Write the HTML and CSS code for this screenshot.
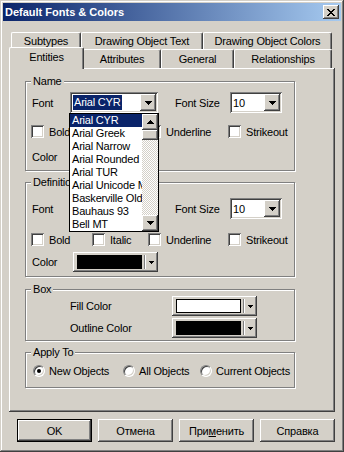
FILE: index.html
```html
<!DOCTYPE html>
<html lang="en">
<head>
    <meta charset="UTF-8">
    <title>Default Fonts &amp; Colors</title>
<link rel="stylesheet" href="styles.css">
</head>
<body>
    <div class="window">
        <div class="titlebar">
            <span class="title">Default Fonts &amp; Colors</span>
            <span class="close raised">
                <svg width="8" height="7" viewBox="0 0 8 7"><path d="M0 0h2v1H0zM6 0h2v1H6zM1 1h2v1H1zM5 1h2v1H5zM2 2h4v1H2zM3 3h2v1H3zM2 4h4v1H2zM1 5h2v1H1zM5 5h2v1H5zM0 6h2v1H0zM6 6h2v1H6z"/></svg>
            </span>
        </div>

        <div class="tabs">
            <div class="tab-row back">
                <div class="tab" style="width: 70px">Subtypes</div>
                <div class="tab" style="width: 122px">Drawing Object Text</div>
                <div class="tab" style="width: 129px">Drawing Object Colors</div>
            </div>
            <div class="tab-row front">
                <div class="tab active" style="width: 75px">Entities</div>
                <div class="tab" style="width: 78px">Attributes</div>
                <div class="tab" style="width: 73px">General</div>
                <div class="tab" style="width: 98px">Relationships</div>
            </div>

            <div class="panel">
                <fieldset class="group group-name">
                    <legend>Name</legend>
                    <div class="row font-row">
                        <span class="lbl lbl-font">Font</span>
                        <div class="combo combo-font">
                            <span class="combo-value"><span class="sel">Arial CYR</span></span>
                            <span class="combo-btn raised"><svg width="7" height="4" viewBox="0 0 7 4"><path d="M0 0h7v1H0zM1 1h5v1H1zM2 2h3v1H2zM3 3h1v1H3z"/></svg></span>
                            <div class="dropdown">
                                <div class="list-items">
                                    <div class="sel">Arial CYR</div>
                                    <div>Arial Greek</div>
                                    <div>Arial Narrow</div>
                                    <div>Arial Rounded</div>
                                    <div>Arial TUR</div>
                                    <div>Arial Unicode MS</div>
                                    <div>Baskerville Old Face</div>
                                    <div>Bauhaus 93</div>
                                    <div>Bell MT</div>
                                </div>
                                <div class="scrollbar">
                                    <span class="sb-btn raised"><svg width="7" height="4" viewBox="0 0 7 4"><path d="M3 0h1v1H3zM2 1h3v1H2zM1 2h5v1H1zM0 3h7v1H0z"/></svg></span>
                                    <span class="sb-thumb raised"></span>
                                    <span class="sb-track"></span>
                                    <span class="sb-btn raised"><svg width="7" height="4" viewBox="0 0 7 4"><path d="M0 0h7v1H0zM1 1h5v1H1zM2 2h3v1H2zM3 3h1v1H3z"/></svg></span>
                                </div>
                            </div>
                        </div>
                        <span class="lbl lbl-size">Font Size</span>
                        <div class="combo combo-size">
                            <span class="combo-value">10</span>
                            <span class="combo-btn raised"><svg width="7" height="4" viewBox="0 0 7 4"><path d="M0 0h7v1H0zM1 1h5v1H1zM2 2h3v1H2zM3 3h1v1H3z"/></svg></span>
                        </div>
                    </div>
                    <div class="row check-row">
                        <label class="check" style="width: 61px"><span class="box"></span>Bold</label>
                        <label class="check" style="width: 56px"><span class="box"></span>Italic</label>
                        <label class="check" style="width: 80px"><span class="box"></span>Underline</label>
                        <label class="check"><span class="box"></span>Strikeout</label>
                    </div>
                    <div class="row color-row">
                        <span class="lbl lbl-color">Color</span>
                        <div class="picker raised">
                            <span class="swatch black"></span>
                            <span class="sep"></span>
                            <span class="mini-arrow"><svg width="5" height="3" viewBox="0 0 5 3"><path d="M0 0h5v1H0zM1 1h3v1H1zM2 2h1v1H2z"/></svg></span>
                        </div>
                    </div>
                </fieldset>

                <fieldset class="group group-def">
                    <legend>Definition</legend>
                    <div class="row font-row">
                        <span class="lbl lbl-font">Font</span>
                        <div class="combo combo-font">
                            <span class="combo-value">Arial CYR</span>
                            <span class="combo-btn raised"><svg width="7" height="4" viewBox="0 0 7 4"><path d="M0 0h7v1H0zM1 1h5v1H1zM2 2h3v1H2zM3 3h1v1H3z"/></svg></span>
                        </div>
                        <span class="lbl lbl-size">Font Size</span>
                        <div class="combo combo-size">
                            <span class="combo-value">10</span>
                            <span class="combo-btn raised"><svg width="7" height="4" viewBox="0 0 7 4"><path d="M0 0h7v1H0zM1 1h5v1H1zM2 2h3v1H2zM3 3h1v1H3z"/></svg></span>
                        </div>
                    </div>
                    <div class="row check-row">
                        <label class="check" style="width: 61px"><span class="box"></span>Bold</label>
                        <label class="check" style="width: 56px"><span class="box"></span>Italic</label>
                        <label class="check" style="width: 80px"><span class="box"></span>Underline</label>
                        <label class="check"><span class="box"></span>Strikeout</label>
                    </div>
                    <div class="row color-row">
                        <span class="lbl lbl-color">Color</span>
                        <div class="picker raised">
                            <span class="swatch black"></span>
                            <span class="sep"></span>
                            <span class="mini-arrow"><svg width="5" height="3" viewBox="0 0 5 3"><path d="M0 0h5v1H0zM1 1h3v1H1zM2 2h1v1H2z"/></svg></span>
                        </div>
                    </div>
                </fieldset>

                <fieldset class="group group-box">
                    <legend>Box</legend>
                    <div class="row box-row">
                        <span class="lbl lbl-box">Fill Color</span>
                        <div class="picker raised">
                            <span class="swatch white"></span>
                            <span class="sep"></span>
                            <span class="mini-arrow"><svg width="5" height="3" viewBox="0 0 5 3"><path d="M0 0h5v1H0zM1 1h3v1H1zM2 2h1v1H2z"/></svg></span>
                        </div>
                    </div>
                    <div class="row box-row">
                        <span class="lbl lbl-box">Outline Color</span>
                        <div class="picker raised">
                            <span class="swatch black"></span>
                            <span class="sep"></span>
                            <span class="mini-arrow"><svg width="5" height="3" viewBox="0 0 5 3"><path d="M0 0h5v1H0zM1 1h3v1H1zM2 2h1v1H2z"/></svg></span>
                        </div>
                    </div>
                </fieldset>

                <fieldset class="group group-apply">
                    <legend>Apply To</legend>
                    <div class="row radio-row">
                        <label class="radio" style="width: 90px"><span class="dot checked"></span>New Objects</label>
                        <label class="radio" style="width: 77px"><span class="dot"></span>All Objects</label>
                        <label class="radio"><span class="dot"></span>Current Objects</label>
                    </div>
                </fieldset>
            </div>
        </div>

        <div class="buttons">
            <span class="btn default">OK</span>
            <span class="btn raised">Отмена</span>
            <span class="btn raised">При<u>м</u>енить</span>
            <span class="btn raised">Справка</span>
        </div>
    </div>
</body>
</html>
```

FILE: styles.css
```css
* {
    box-sizing: border-box;
}

body {
    margin: 0;
    font-family: "Liberation Sans", Arial, sans-serif;
    font-size: 11px;
    letter-spacing: -0.2px;
    color: #000;
    background-color: #d4d0c8;
}

.window {
    width: 344px;
    height: 452px;
    padding: 3px;
    background-color: #d4d0c8;
    box-shadow: inset -1px -1px #404040, inset 1px 1px #d4d0c8, inset -2px -2px #808080, inset 2px 2px #fff;
}

.raised {
    background-color: #d4d0c8;
    box-shadow: inset -1px -1px #404040, inset 1px 1px #fff, inset -2px -2px #808080, inset 2px 2px #d4d0c8;
}

/* title bar */
.titlebar {
    height: 18px;
    display: flex;
    align-items: center;
    justify-content: space-between;
    padding: 0 2px;
    background: linear-gradient(to right, #0a246a, #a6caf0);
    color: #fff;
    font-weight: bold;
    letter-spacing: 0;
}

.close {
    width: 16px;
    height: 14px;
    display: flex;
    align-items: center;
    justify-content: center;
}

/* tabs */
.tabs {
    margin: 11px 0 0 6px;
    width: 326px;
}

.tab-row {
    display: flex;
    padding-left: 2px;
}

.tab-row.back {
    height: 17px;
}

.tab-row.front {
    height: 19px;
}

.tab {
    display: flex;
    align-items: center;
    justify-content: center;
    border-top: 1px solid #fff;
    border-left: 1px solid #fff;
    border-right: 1px solid #404040;
    border-radius: 2px 2px 0 0;
    box-shadow: inset -1px 0 #808080;
    white-space: nowrap;
}

.tab.active {
    position: relative;
    z-index: 1;
    height: 22px;
    margin: -2px -1px 0 -2px;
    padding-bottom: 3px;
    background-color: #d4d0c8;
}

.panel {
    height: 344px;
    padding: 7px 0 0 16px;
    box-shadow: inset -1px -1px #404040, inset 1px 1px #fff, inset -2px -2px #808080, inset 2px 2px #d4d0c8;
}

/* group boxes */
.group {
    width: 270px;
    margin: 0;
    padding: 0;
    border: 1px solid #808080;
    box-shadow: 1px 1px #fff, inset 1px 1px #fff;
}

.group legend {
    margin-left: 5px;
    padding: 0 2px;
    line-height: 13px;
    background-color: #d4d0c8;
}

.group + .group {
    margin-top: 5px;
}

.group-box {
    margin-top: 6px !important;
}

.row {
    display: flex;
    align-items: center;
}

.font-row, .color-row {
    padding-left: 6px;
}

.lbl-font {
    width: 38px;
}

.lbl-size {
    width: 55px;
    margin-left: 17px;
}

.lbl-color {
    width: 41px;
}

.group-name {
    padding-bottom: 3px;
}

.group-name .font-row {
    margin-top: 4px;
}

.group-name .check-row {
    margin-top: 12px;
}

.group-name .color-row {
    margin-top: 9px;
}

.group-def {
    padding-bottom: 4px;
}

.group-def .font-row {
    margin-top: 9px;
}

.group-def .check-row {
    margin-top: 14px;
}

.group-def .color-row {
    margin-top: 6px;
}

.group-box {
    padding-bottom: 2px;
}

.box-row {
    padding-left: 44px;
}

.box-row + .box-row {
    margin-top: 2px;
}

.lbl-box {
    width: 102px;
}

.group-apply {
    padding-bottom: 10px;
}

.radio-row {
    margin-top: 6px;
    padding-left: 7px;
}

/* combo boxes */
.combo {
    position: relative;
    display: flex;
    height: 21px;
    padding: 2px;
    background-color: #fff;
    box-shadow: inset 1px 1px #808080, inset -1px -1px #fff, inset 2px 2px #404040, inset -2px -2px #d4d0c8;
}

.combo-font {
    width: 88px;
}

.combo-size {
    width: 52px;
}

.combo-value {
    flex: 1;
    display: flex;
    align-items: center;
    padding-left: 1px;
    white-space: nowrap;
    overflow: hidden;
}

.combo-value .sel {
    padding: 0 1px;
    line-height: 15px;
    background-color: #0a246a;
    color: #fff;
}

.combo-btn, .sb-btn {
    width: 16px;
    height: 17px;
    display: flex;
    align-items: center;
    justify-content: center;
}

/* open list */
.dropdown {
    position: absolute;
    z-index: 2;
    top: 100%;
    left: -1px;
    width: 90px;
    height: 119px;
    display: flex;
    border: 1px solid #000;
    background-color: #fff;
}

.list-items {
    flex: 1;
    overflow: hidden;
}

.list-items div {
    height: 13px;
    line-height: 13px;
    padding-left: 2px;
    white-space: nowrap;
}

.list-items .sel {
    background-color: #0a246a;
    color: #fff;
}

.scrollbar {
    width: 16px;
    display: flex;
    flex-direction: column;
    background: repeating-conic-gradient(#fff 0 25%, #d4d0c8 0 50%) 0 0 / 2px 2px;
}

.sb-btn {
    height: 16px;
}

.sb-thumb {
    height: 10px;
}

.sb-track {
    flex: 1;
}

/* colour pickers */
.picker {
    width: 85px;
    height: 20px;
    display: flex;
    align-items: center;
    padding: 3px 3px 3px 4px;
}

.swatch {
    flex: 1;
    height: 14px;
    border: 1px solid #000;
}

.swatch.black {
    background-color: #000;
}

.swatch.white {
    background-color: #fff;
}

.sep {
    width: 2px;
    height: 14px;
    margin: 0 1px 0 2px;
    border-left: 1px solid #808080;
    border-right: 1px solid #fff;
}

.mini-arrow {
    width: 8px;
    display: flex;
    justify-content: center;
}

/* check boxes and radios */
.check-row {
    padding-left: 5px;
}

.check, .radio {
    display: flex;
    align-items: center;
    white-space: nowrap;
}

.box {
    width: 13px;
    height: 13px;
    margin-right: 5px;
    background-color: #fff;
    box-shadow: inset 1px 1px #808080, inset -1px -1px #fff, inset 2px 2px #404040, inset -2px -2px #d4d0c8;
}

.dot {
    width: 12px;
    height: 12px;
    margin-right: 4px;
    border-radius: 50%;
    border: 1px solid;
    border-color: #808080 #fff #fff #808080;
    background-color: #fff;
    box-shadow: inset 1px 1px #404040, inset -1px -1px #d4d0c8;
    display: flex;
    align-items: center;
    justify-content: center;
}

.dot.checked::after {
    content: "";
    width: 4px;
    height: 4px;
    border-radius: 50%;
    background-color: #000;
}

/* bottom buttons */
.buttons {
    display: flex;
    gap: 6px;
    margin-top: 7px;
    padding-left: 14px;
}

.btn {
    width: 75px;
    height: 23px;
    display: flex;
    align-items: center;
    justify-content: center;
}

.btn.default {
    background-color: #d4d0c8;
    box-shadow: inset 0 0 0 1px #000, inset -2px -2px #404040, inset 2px 2px #fff, inset -3px -3px #808080, inset 3px 3px #d4d0c8;
}
```
